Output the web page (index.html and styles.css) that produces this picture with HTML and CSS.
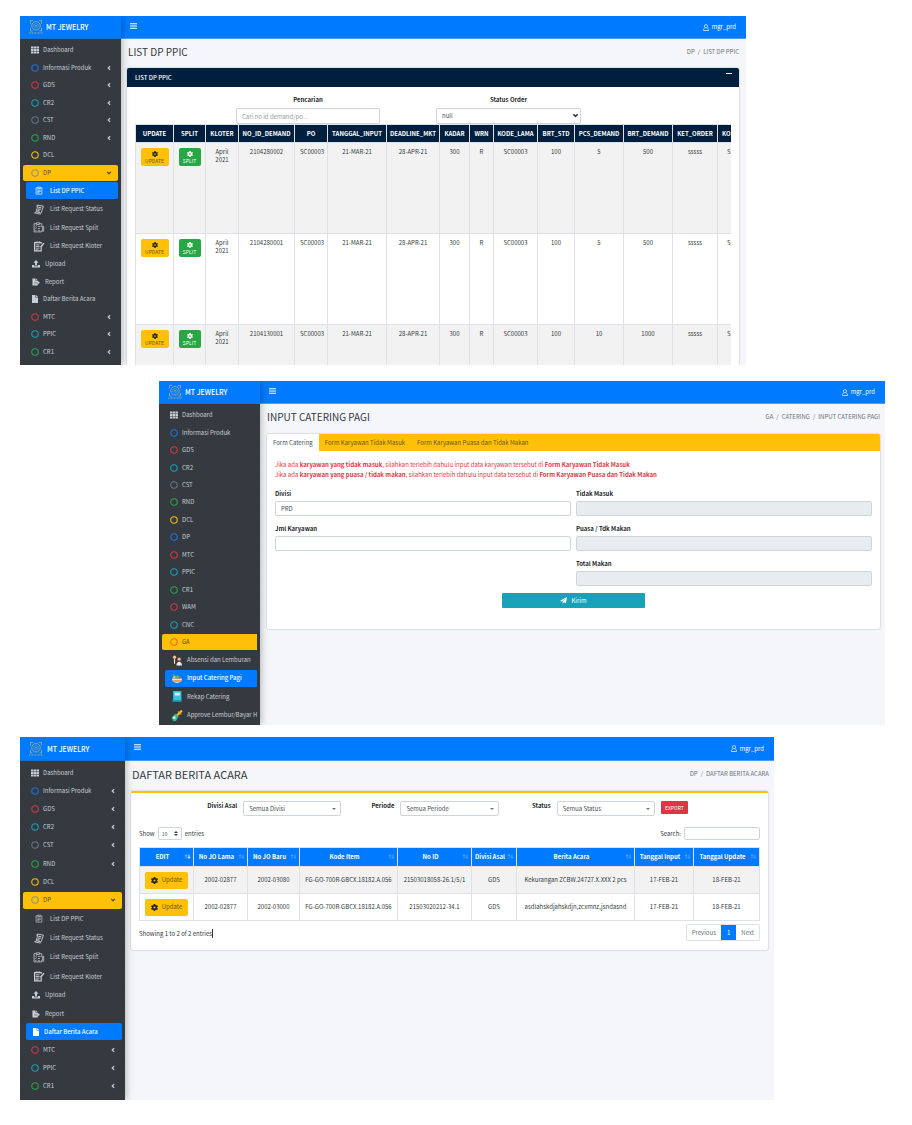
FILE: index.html
```html
<!DOCTYPE html>
<html lang="id">
<head>
<meta charset="utf-8">
<meta name="viewport" content="width=device-width, initial-scale=1">
<title>MT JEWELRY</title>
<link rel="stylesheet" href="styles.css">
</head>
<body>
<svg class="sprite" aria-hidden="true">
  <symbol id="logo" viewBox="0 0 28 28"><g fill="none" stroke="#b9b07a" stroke-width="1.500"><path d="M3 7V1h5M20 1h5v6M25 16v6h-4M7 22H3v-6"/><circle cx="14" cy="11.500" r="8.500"/><circle cx="14" cy="11.500" r="4.500" stroke-dasharray="2 1.500"/><circle cx="14" cy="11.500" r="1"/></g><path d="M0 26h28" stroke="#a8a67c" stroke-width="2" stroke-dasharray="2 1"/></symbol>
  <symbol id="bars" viewBox="0 0 14 12"><path d="M0 1.500h14M0 6h14M0 10.500h14" stroke="currentColor" stroke-width="2"/></symbol>
  <symbol id="user" viewBox="0 0 14 16"><g fill="none" stroke="currentColor" stroke-width="1.600"><circle cx="7" cy="5" r="3.800"/><path d="M4 9.500c-2 .5-3 2-3 5.500h12c0-3.500-1-5-3-5.500"/></g></symbol>
  <symbol id="th" viewBox="0 0 16 16"><path fill="currentColor" d="M0 1h4.800v4.200H0zM5.600 1h4.800v4.200H5.600zM11.200 1H16v4.200h-4.800zM0 6h4.800v4.200H0zM5.600 6h4.800v4.200H5.600zM11.200 6H16v4.200h-4.800zM0 11h4.800v4.200H0zM5.600 11h4.800v4.200H5.600zM11.200 11H16v4.200h-4.800z"/></symbol>
  <symbol id="ring" viewBox="0 0 16 16"><circle cx="8" cy="8" r="6.500" fill="none" stroke="currentColor" stroke-width="2.200"/></symbol>
  <symbol id="left" viewBox="0 0 10 16"><path d="M8 3L3 8l5 5" fill="none" stroke="currentColor" stroke-width="3.500"/></symbol>
  <symbol id="down" viewBox="0 0 16 10"><path d="M3 2l5 5 5-5" fill="none" stroke="currentColor" stroke-width="3.500"/></symbol>
  <symbol id="clip" viewBox="0 0 20 20"><g fill="none" stroke="currentColor" stroke-width="1.500"><path d="M7 4H3.500v14h13V4H13M7 2.500h6v3H7z"/><path d="M6 9h8M6 12h8M6 15h5"/></g></symbol>
  <symbol id="scroll" viewBox="0 0 20 20"><g fill="none" stroke="currentColor" stroke-width="1.700"><path d="M8 2l10 2-4 12c-.5 2-2 2.500-3.500 2L2 16c1.500 0 2.500-.5 3-2zM5 14l8 2M8 2c-2 0-3 2-1.500 3"/><path d="M9 6l5 1M8 9l5 1M7 12l4 1" stroke-width="2"/></g></symbol>
  <symbol id="split" viewBox="0 0 20 20"><g fill="none" stroke="currentColor" stroke-width="1.400"><path d="M5 3H1v15h14v-3M11 3h4v6M5 1.500h6v3H5z"/><path d="M3 7l1 1 2-2M3 11l1 1 2-2M3 15l1 1 2-2M8 8h5M8 12h4M8 16h4M18.500 8v7l-1 2.500-1-2.500V8z"/></g></symbol>
  <symbol id="kloter" viewBox="0 0 20 20"><g fill="none" stroke="currentColor" stroke-width="2.200"><path d="M14 9v9H2V3h12v2M5 1v3M8 1v3M11 1v3"/><path d="M4 7h7M4 10h7M4 13h7M4 16h5" stroke-width="1.600"/><path d="M19 4l-6 7" stroke-width="2.500"/></g></symbol>
  <symbol id="upload" viewBox="0 0 16 16"><path fill="currentColor" d="M8 0l5 5.500h-3V11H6V5.500H3zM0 10h4.500v2.500h7V10H16v5H0z"/></symbol>
  <symbol id="report" viewBox="0 0 18 16"><path fill="currentColor" d="M1 0h7v5h5v3H6v3h7v5H1zM9 0l4 4H9zM13 6l5 3.500-5 3.500v-2.500H7v-2h6z"/></symbol>
  <symbol id="file" viewBox="0 0 12 16"><path fill="currentColor" d="M0 0h7v5h5v11H0zM8 0l4 4H8z"/></symbol>
  <symbol id="gear" viewBox="0 0 16 16"><circle cx="8" cy="8" r="4.200" fill="none" stroke="currentColor" stroke-width="3.800"/><path d="M8 0v3M8 13v3M1 4l2.700 1.500M12.300 10.500L15 12M1 12l2.700-1.500M12.300 5.500L15 4" stroke="currentColor" stroke-width="3.800"/></symbol>
  <symbol id="plane" viewBox="0 0 16 16"><path fill="currentColor" d="M16 0l-2.500 14-5-2L6 15.500V11l7-8-8.500 7L0 8.500z"/></symbol>
  <symbol id="sort" viewBox="0 0 16 12"><path d="M4.500 11V2M1.500 5l3-3.500 3 3.500" fill="none" stroke="currentColor" stroke-width="1.600"/><path d="M11.500 1v9M8.500 7l3 3.500 3-3.500" fill="none" stroke="currentColor" stroke-width="1.600"/></symbol>
  <symbol id="sorted" viewBox="0 0 16 12"><path d="M4.500 11V2M1.500 5l3-3.500 3 3.500" fill="none" stroke="#8ec3ff" stroke-width="1.600"/><path d="M11.500 1v9M8.500 7l3 3.500 3-3.500" fill="none" stroke="#fff" stroke-width="2.200"/></symbol>
  <symbol id="people" viewBox="0 0 20 20"><circle cx="5.500" cy="4" r="3" fill="#efc09a"/><path d="M3 8h5l1 9H2z" fill="#4a2f2b"/><path d="M4.500 7h2v9h-2z" fill="#f2e8df"/><path d="M10 8c0-6 8-6 8 0v4h-8z" fill="#6b4640"/><circle cx="14" cy="7.500" r="2.500" fill="#efc09a"/><path d="M9 19c0-9 10-9 10 0z" fill="#e9eef2"/></symbol>
  <symbol id="food" viewBox="0 0 20 20"><path d="M1 10h18c0 5-3 8-9 8s-9-3-9-8z" fill="#efe6d0"/><path d="M1 13h18v3H2z" fill="#f08a3c"/><path d="M2 10c0-6 6-7 8-2z" fill="#f4c14c"/><path d="M9 10c1-6 7-6 9 0z" fill="#e4574c"/><path d="M2 2l8 6M8 8c1-4 4-4 5 0z" fill="#54b86b" stroke="#54b86b" stroke-width="2"/></symbol>
  <symbol id="note" viewBox="0 0 20 20"><path d="M3 0h15v19H3z" fill="#33c6e0"/><path d="M6 3h9v5H6z" fill="#d8f4fa"/><path d="M1 17h17v2H1z" fill="#1793ad"/></symbol>
  <symbol id="brush" viewBox="0 0 20 20"><path d="M19 1L9 11" stroke="#f3b62b" stroke-width="4"/><path d="M12 3l6 5" stroke="#f3b62b" stroke-width="2"/><path d="M7 7l6 5-5 8H3l-3-6z" fill="#37b98c"/><circle cx="5" cy="14" r="2.500" fill="#d8efe8"/></symbol>
</svg>

<main class="board">

<section class="app app-list">
  <aside class="side">
    <a class="brand" href="#"><svg><use href="#logo"/></svg>MT JEWELRY</a>
    <nav class="nav">
      <a class="item" href="#"><svg class="ic"><use href="#th"/></svg>Dashboard</a>
      <a class="item" href="#"><svg class="ic blue"><use href="#ring"/></svg>Informasi Produk<svg class="car"><use href="#left"/></svg></a>
      <a class="item" href="#"><svg class="ic red"><use href="#ring"/></svg>GDS<svg class="car"><use href="#left"/></svg></a>
      <a class="item" href="#"><svg class="ic teal"><use href="#ring"/></svg>CR2<svg class="car"><use href="#left"/></svg></a>
      <a class="item" href="#"><svg class="ic gray"><use href="#ring"/></svg>CST<svg class="car"><use href="#left"/></svg></a>
      <a class="item" href="#"><svg class="ic green"><use href="#ring"/></svg>RND<svg class="car"><use href="#left"/></svg></a>
      <a class="item" href="#"><svg class="ic amber"><use href="#ring"/></svg>DCL</a>
      <a class="item open" href="#"><svg class="ic slate"><use href="#ring"/></svg>DP<svg class="car"><use href="#down"/></svg></a>
      <a class="item sub active" href="#"><svg class="ic clip"><use href="#clip"/></svg>List DP PPIC</a>
      <a class="item sub" href="#"><svg class="ic"><use href="#scroll"/></svg>List Request Status</a>
      <a class="item sub" href="#"><svg class="ic"><use href="#split"/></svg>List Request Split</a>
      <a class="item sub" href="#"><svg class="ic"><use href="#kloter"/></svg>List Request Kloter</a>
      <a class="item mid" href="#"><svg class="ic"><use href="#upload"/></svg>Upload</a>
      <a class="item mid" href="#"><svg class="ic"><use href="#report"/></svg>Report</a>
      <a class="item doc" href="#"><svg class="ic"><use href="#file"/></svg>Daftar Berita Acara</a>
      <a class="item" href="#"><svg class="ic red"><use href="#ring"/></svg>MTC<svg class="car"><use href="#left"/></svg></a>
      <a class="item" href="#"><svg class="ic teal"><use href="#ring"/></svg>PPIC<svg class="car"><use href="#left"/></svg></a>
      <a class="item" href="#"><svg class="ic green"><use href="#ring"/></svg>CR1<svg class="car"><use href="#left"/></svg></a>
    </nav>
  </aside>
  <div class="page">
    <header class="top"><button class="burger" aria-label="Menu"><svg><use href="#bars"/></svg></button><a class="user" href="#"><svg><use href="#user"/></svg>mgr_prd</a></header>
    <div class="head"><h1>LIST DP PPIC</h1><p class="crumbs">DP<span>/</span>LIST DP PPIC</p></div>
    <div class="card navy">
      <div class="card-head"><h2>LIST DP PPIC</h2><button class="minus" aria-label="Tutup"></button></div>
      <div class="card-body">
        <div class="search">
          <div class="field f1"><label for="cari">Pencarian</label><input id="cari" type="text" placeholder="Cari no id demand/po..."></div>
          <div class="field f2"><label for="status">Status Order</label><div class="pick"><select id="status"><option>null</option></select><svg><use href="#down"/></svg></div></div>
        </div>
        <div class="scroller">
        <table class="orders">
          <colgroup><col class="w38"><col class="w32"><col class="w33"><col class="w56"><col class="w33"><col class="w59"><col class="w53"><col class="w30"><col class="w24"><col class="w44"><col class="w37"><col class="w49"><col class="w49"><col class="w45"><col class="w45"></colgroup>
          <thead><tr><th>UPDATE</th><th>SPLIT</th><th>KLOTER</th><th>NO_ID_DEMAND</th><th>PO</th><th>TANGGAL_INPUT</th><th>DEADLINE_MKT</th><th>KADAR</th><th>WRN</th><th>KODE_LAMA</th><th>BRT_STD</th><th>PCS_DEMAND</th><th>BRT_DEMAND</th><th>KET_ORDER</th><th class="cut">KO</th></tr></thead>
          <tbody>
            <tr><td><button class="act upd"><svg><use href="#gear"/></svg>UPDATE</button></td><td><button class="act spl"><svg><use href="#gear"/></svg>SPLIT</button></td><td>April 2021</td><td>2104280002</td><td>SC00003</td><td>21-MAR-21</td><td>28-APR-21</td><td>300</td><td>R</td><td>SC00003</td><td>100</td><td>5</td><td>500</td><td>sssss</td><td class="cut2">S</td></tr>
            <tr><td><button class="act upd"><svg><use href="#gear"/></svg>UPDATE</button></td><td><button class="act spl"><svg><use href="#gear"/></svg>SPLIT</button></td><td>April 2021</td><td>2104280001</td><td>SC00003</td><td>21-MAR-21</td><td>28-APR-21</td><td>300</td><td>R</td><td>SC00003</td><td>100</td><td>5</td><td>500</td><td>sssss</td><td class="cut2">S</td></tr>
            <tr class="last"><td><button class="act upd"><svg><use href="#gear"/></svg>UPDATE</button></td><td><button class="act spl"><svg><use href="#gear"/></svg>SPLIT</button></td><td>April 2021</td><td>2104130001</td><td>SC00003</td><td>21-MAR-21</td><td>28-APR-21</td><td>300</td><td>R</td><td>SC00003</td><td>100</td><td>10</td><td>1000</td><td>sssss</td><td class="cut2">S</td></tr>
          </tbody>
        </table>
        </div>
      </div>
    </div>
  </div>
</section>

<section class="app app-form">
  <aside class="side">
    <a class="brand" href="#"><svg><use href="#logo"/></svg>MT JEWELRY</a>
    <nav class="nav">
      <a class="item" href="#"><svg class="ic"><use href="#th"/></svg>Dashboard</a>
      <a class="item" href="#"><svg class="ic blue"><use href="#ring"/></svg>Informasi Produk</a>
      <a class="item" href="#"><svg class="ic red"><use href="#ring"/></svg>GDS</a>
      <a class="item" href="#"><svg class="ic teal"><use href="#ring"/></svg>CR2</a>
      <a class="item" href="#"><svg class="ic gray"><use href="#ring"/></svg>CST</a>
      <a class="item" href="#"><svg class="ic green"><use href="#ring"/></svg>RND</a>
      <a class="item" href="#"><svg class="ic amber"><use href="#ring"/></svg>DCL</a>
      <a class="item" href="#"><svg class="ic blue"><use href="#ring"/></svg>DP</a>
      <a class="item" href="#"><svg class="ic red"><use href="#ring"/></svg>MTC</a>
      <a class="item" href="#"><svg class="ic teal"><use href="#ring"/></svg>PPIC</a>
      <a class="item" href="#"><svg class="ic green"><use href="#ring"/></svg>CR1</a>
      <a class="item" href="#"><svg class="ic red"><use href="#ring"/></svg>WAM</a>
      <a class="item" href="#"><svg class="ic teal"><use href="#ring"/></svg>CNC</a>
      <a class="item open" href="#"><svg class="ic orange"><use href="#ring"/></svg>GA</a>
      <a class="item sub" href="#"><svg class="ic"><use href="#people"/></svg>Absensi dan Lemburan</a>
      <a class="item sub active" href="#"><svg class="ic"><use href="#food"/></svg>Input Catering Pagi</a>
      <a class="item sub" href="#"><svg class="ic"><use href="#note"/></svg>Rekap Catering</a>
      <a class="item sub" href="#"><svg class="ic"><use href="#brush"/></svg>Approve Lembur/Bayar Hu</a>
    </nav>
  </aside>
  <div class="page">
    <header class="top"><button class="burger" aria-label="Menu"><svg><use href="#bars"/></svg></button><a class="user" href="#"><svg><use href="#user"/></svg>mgr_prd</a></header>
    <div class="head"><h1>INPUT CATERING PAGI</h1><p class="crumbs">GA<span>/</span>CATERING<span>/</span>INPUT CATERING PAGI</p></div>
    <div class="card">
      <div class="tabs"><a class="on" href="#">Form Catering</a><a href="#">Form Karyawan Tidak Masuk</a><a href="#">Form Karyawan Puasa dan Tidak Makan</a></div>
      <form class="catering">
        <p class="warn">Jika ada <b>karyawan yang tidak masuk</b>, silahkan terlebih dahulu input data karyawan tersebut di <b>Form Karyawan Tidak Masuk</b><br>Jika ada <b>karyawan yang puasa / tidak makan</b>, silahkan terlebih dahulu input data tersebut di <b>Form Karyawan Puasa dan Tidak Makan</b></p>
        <div class="cols">
          <div class="col">
            <div class="field"><label for="divisi">Divisi</label><input id="divisi" type="text" value="PRD"></div>
            <div class="field"><label for="jml">Jml Karyawan</label><input id="jml" type="text"></div>
          </div>
          <div class="col">
            <div class="field"><label for="tm">Tidak Masuk</label><input id="tm" type="text" disabled></div>
            <div class="field"><label for="pm">Puasa / Tdk Makan</label><input id="pm" type="text" disabled></div>
            <div class="field"><label for="tot">Total Makan</label><input id="tot" type="text" disabled></div>
          </div>
        </div>
        <button type="button" class="send"><svg><use href="#plane"/></svg>Kirim</button>
      </form>
    </div>
  </div>
</section>

<section class="app app-news">
  <aside class="side">
    <a class="brand" href="#"><svg><use href="#logo"/></svg>MT JEWELRY</a>
    <nav class="nav">
      <a class="item" href="#"><svg class="ic"><use href="#th"/></svg>Dashboard</a>
      <a class="item" href="#"><svg class="ic blue"><use href="#ring"/></svg>Informasi Produk<svg class="car"><use href="#left"/></svg></a>
      <a class="item" href="#"><svg class="ic red"><use href="#ring"/></svg>GDS<svg class="car"><use href="#left"/></svg></a>
      <a class="item" href="#"><svg class="ic teal"><use href="#ring"/></svg>CR2<svg class="car"><use href="#left"/></svg></a>
      <a class="item" href="#"><svg class="ic gray"><use href="#ring"/></svg>CST<svg class="car"><use href="#left"/></svg></a>
      <a class="item" href="#"><svg class="ic green"><use href="#ring"/></svg>RND<svg class="car"><use href="#left"/></svg></a>
      <a class="item" href="#"><svg class="ic amber"><use href="#ring"/></svg>DCL</a>
      <a class="item open" href="#"><svg class="ic slate"><use href="#ring"/></svg>DP<svg class="car"><use href="#down"/></svg></a>
      <a class="item sub" href="#"><svg class="ic clip"><use href="#clip"/></svg>List DP PPIC</a>
      <a class="item sub" href="#"><svg class="ic"><use href="#scroll"/></svg>List Request Status</a>
      <a class="item sub" href="#"><svg class="ic"><use href="#split"/></svg>List Request Split</a>
      <a class="item sub" href="#"><svg class="ic"><use href="#kloter"/></svg>List Request Kloter</a>
      <a class="item mid" href="#"><svg class="ic"><use href="#upload"/></svg>Upload</a>
      <a class="item mid" href="#"><svg class="ic"><use href="#report"/></svg>Report</a>
      <a class="item doc active" href="#"><svg class="ic"><use href="#file"/></svg>Daftar Berita Acara</a>
      <a class="item" href="#"><svg class="ic red"><use href="#ring"/></svg>MTC<svg class="car"><use href="#left"/></svg></a>
      <a class="item" href="#"><svg class="ic teal"><use href="#ring"/></svg>PPIC<svg class="car"><use href="#left"/></svg></a>
      <a class="item" href="#"><svg class="ic green"><use href="#ring"/></svg>CR1<svg class="car"><use href="#left"/></svg></a>
    </nav>
  </aside>
  <div class="page">
    <header class="top"><button class="burger" aria-label="Menu"><svg><use href="#bars"/></svg></button><a class="user" href="#"><svg><use href="#user"/></svg>mgr_prd</a></header>
    <div class="head"><h1>DAFTAR BERITA ACARA</h1><p class="crumbs">DP<span>/</span>DAFTAR BERITA ACARA</p></div>
    <div class="card gold">
      <div class="filters">
        <label for="da">Divisi Asal</label><div class="pick"><select id="da"><option>Semua Divisi</option></select><i class="tri"></i></div>
        <label for="pe">Periode</label><div class="pick"><select id="pe"><option>Semua Periode</option></select><i class="tri"></i></div>
        <label for="st">Status</label><div class="pick"><select id="st"><option>Semua Status</option></select><i class="tri"></i></div>
        <button class="export">EXPORT</button>
      </div>
      <div class="tools">
        <div class="len"><label for="len">Show</label><div class="pick small"><select id="len"><option>10</option></select><i class="tri up"></i><i class="tri"></i></div>entries</div>
        <div class="find"><label for="find">Search:</label><input id="find" type="text"></div>
      </div>
      <table class="news">
        <colgroup><col class="w54"><col class="w54"><col class="w52"><col class="w98"><col class="w74"><col class="w45"><col class="w118"><col class="w59"><col class="w66"></colgroup>
        <thead><tr>
          <th><span class="th">EDIT<svg><use href="#sorted"/></svg></span></th><th><span class="th">No JO Lama<svg><use href="#sort"/></svg></span></th><th><span class="th">No JO Baru<svg><use href="#sort"/></svg></span></th><th><span class="th">Kode Item<svg><use href="#sort"/></svg></span></th><th><span class="th">No ID<svg><use href="#sort"/></svg></span></th><th><span class="th">Divisi Asal<svg><use href="#sort"/></svg></span></th><th><span class="th">Berita Acara<svg><use href="#sort"/></svg></span></th><th><span class="th">Tanggal Input<svg><use href="#sort"/></svg></span></th><th><span class="th">Tanggal Update<svg><use href="#sort"/></svg></span></th>
        </tr></thead>
        <tbody>
          <tr><td><button class="edit"><svg><use href="#gear"/></svg>Update</button></td><td>2002-02877</td><td>2002-03080</td><td>FG-GO-700R-GBCX.18182.A.056</td><td>21503018058-26.1/5/1</td><td>GDS</td><td>Kekurangan ZCBW.24727.X.XXX 2 pcs</td><td>17-FEB-21</td><td>18-FEB-21</td></tr>
          <tr><td><button class="edit"><svg><use href="#gear"/></svg>Update</button></td><td>2002-02877</td><td>2002-03000</td><td>FG-GO-700R-GBCX.18182.A.056</td><td>21503020212-34.1</td><td>GDS</td><td>asdlahskdjahskdjn,zcxmnz,jsndasnd</td><td>17-FEB-21</td><td>18-FEB-21</td></tr>
        </tbody>
      </table>
      <div class="foot"><p class="info">Showing 1 to 2 of 2 entries</p><div class="pager"><a href="#">Previous</a><a class="on" href="#">1</a><a href="#">Next</a></div></div>
    </div>
  </div>
</section>

</main>
</body>
</html>
```
FILE: styles.css
```css
* { box-sizing: border-box; }
body { margin: 0; background: #fff; color: #343a40; font-family: "Noto Sans CJK SC", "Noto Sans", sans-serif; font-size: 6px; line-height: 10px; }
h1, h2, p { margin: 0; font-weight: 400; }
a { color: inherit; text-decoration: none; }
button, input, select { font: inherit; color: inherit; margin: 0; padding: 0; border: 0; background: none; border-radius: 0; outline: 0; }
svg { display: block; flex: none; }
.sprite { position: absolute; width: 0; height: 0; }

.board { display: flex; flex-direction: column; padding: 16px 27px 25px 20px; }
.app { display: grid; grid-template-columns: 101px minmax(0, 1fr); background: #f4f6f9; overflow: hidden; }
.app-list { min-height: 349px; margin-right: 139px; }
.app-form { min-height: 344px; margin: 16px 0 0 139px; }
.app-news { min-height: 363px; margin: 12px 111px 0 0; grid-template-columns: 105px minmax(0, 1fr); }

/* sidebar */
.side { position: relative; z-index: 2; display: flex; flex-direction: column; min-width: 0; background: #343a40; box-shadow: 0 0 8px rgba(0, 0, 0, .35); }
.brand { display: flex; align-items: center; gap: 3px; height: 23px; padding-left: 9px; background: #007bff; color: #fff; font-size: 7px; font-weight: 500; border-bottom: 1px solid #1a6fd0; }
.brand svg { width: 14px; height: 14px; }
.nav { flex: 1; display: flex; flex-direction: column; padding: 3px 3px 4px; color: #c8cdd2; }
.app-form .nav { padding-bottom: 0; }
.item { flex: 17 0 0px; display: flex; align-items: center; gap: 4px; min-height: 16px; padding-left: 8px; border-bottom: 1px solid #343a40; background-clip: padding-box; border-radius: 2px; white-space: nowrap; overflow: hidden; }
.ic { width: 8px; height: 8px; }
.car { width: 6px; height: 6px; margin: 0 6px 0 auto; }
.sub { flex-grow: 18; margin-left: 3px; gap: 5px; padding-left: 7px; }
.sub .ic { width: 12px; height: 11px; }
.sub .clip { padding: 1px; }
.app-form .sub { gap: 4px; padding-left: 6px; }
.app-form .open, .app-form .sub { border-radius: 2px 0 0 2px; }
.mid { gap: 5px; padding-left: 9px; }
.doc { gap: 5px; padding-left: 9px; }
.doc .ic { width: 6px; }
.doc.active { margin-left: 3px; padding-left: 7px; }
.open { background-color: #ffc107; color: #5c4a10; }
.active { background-color: #007bff; color: #fff; font-weight: 500; }
.blue { color: #1a73e8; } .red { color: #dc3545; } .teal { color: #17a2b8; } .gray { color: #6c757d; }
.green { color: #28a745; } .amber { color: #ffc107; } .slate { color: #8a9080; } .orange { color: #f0672b; }

/* page frame */
.page { display: flex; flex-direction: column; min-width: 0; }
.top { display: flex; align-items: center; justify-content: space-between; height: 23px; padding: 0 10px 0 9px; background: #007bff; color: #fff; border-bottom: 1px solid #4a9df5; }
.burger { padding-bottom: 3px; }
.burger svg { width: 7px; height: 6px; }
.user { display: flex; align-items: center; gap: 3px; }
.user svg { width: 6px; height: 7px; }
.head { display: flex; align-items: center; justify-content: space-between; height: 29px; padding: 0 7px 4px; }
.head h1 { font-size: 10px; line-height: 14px; }
.crumbs { color: #6c757d; }
.crumbs span { margin: 0 3px; }
.card { margin: 0 5px 0 6px; background: #fff; border-radius: 2px; box-shadow: 0 0 2px rgba(0, 0, 0, .3); }
.app-form .card { margin-left: 7px; }
.app-form .head, .app-news .head { height: 30px; padding-right: 5px; }
.app-news .brand, .app-news .top { height: 24px; }
.app-news .brand { gap: 4px; }
.app-news .head h1 { font-size: 11px; }

.field { display: flex; flex-direction: column; }
.field label, .filters label { font-weight: 700; color: #212529; }
input, select { display: block; width: 100%; min-width: 0; height: 16px; padding: 0 5px; border: 1px solid #ced4da; border-radius: 2px; background: #fff; color: #495057; appearance: none; }
input::placeholder { color: #939ba2; opacity: 1; }
input:disabled { background: #e9ecef; }
.pick { position: relative; }
.pick svg { position: absolute; right: 2px; top: 5px; width: 7px; height: 5px; }
.tri { position: absolute; right: 5px; top: 7px; border: 2px solid transparent; border-top-color: #6c757d; border-bottom: 0; }

/* order list */
.app-list .card { flex: 1; margin-right: 7px; border-radius: 2px 2px 0 0; }
.card-head { display: flex; justify-content: space-between; align-items: center; height: 19px; padding: 0 7px 0 8px; background: #001f3f; color: #fff; border-radius: 2px 2px 0 0; }
.card-head h2 { font-size: 6px; font-weight: 500; }
.minus { width: 6px; height: 10px; border-top: 1px solid #fff; }
.card-body { padding: 0 8px; }
.search { display: grid; grid-template-columns: 101fr 144fr 56fr 145fr 150fr; padding-top: 6px; }
.search .field { gap: 2px; }
.search label { text-align: center; line-height: 13px; }
.f1 { grid-column: 2; } .f2 { grid-column: 4; }
.scroller { overflow: hidden; }
table { border-collapse: collapse; table-layout: fixed; }
th, td { padding: 0; text-align: center; border: 1px solid #dee2e6; }
th { font-weight: 700; color: #fff; white-space: nowrap; }
.orders { width: 627px; }
.orders th { height: 18px; background: #001f3f; }
.orders td { height: 91px; padding: 5px 5px 0; vertical-align: top; line-height: 8px; }
.orders tr.last td { height: 40px; border-bottom: 0; }
tbody tr:nth-child(odd) { background: #f2f2f2; }
.orders th.cut { text-align: left; padding-left: 4px; }
.orders td.cut2 { text-align: left; padding-left: 9px; }
.orders td:nth-child(-n+2) { padding: 5px 0 0; }
.act { display: inline-flex; flex-direction: column; align-items: center; justify-content: center; height: 18px; border-radius: 2px; font-size: 5px; line-height: 7px; }
.act svg { width: 6px; height: 6px; }
.upd { background: #ffc107; width: 28px; color: #6b5413; }
.upd svg, .edit svg { color: #212529; }
.spl { background: #28a745; width: 22px; color: #fff; }

/* catering form */
.tabs { display: flex; height: 17px; background: #ffc107; border-radius: 2px 2px 0 0; overflow: hidden; color: #6b5413; }
.tabs a { padding: 4px 6px; }
.tabs .on { background: #fff; color: #495057; }
.catering { padding: 9px 8px 21px; }
.warn { color: #dc3545; }
.cols { display: grid; grid-template-columns: 1fr 1fr; gap: 5px; padding-top: 8px; }
.col { display: flex; flex-direction: column; gap: 7px; }
.col .field { gap: 1px; }
.col label { line-height: 12px; }
.col input { height: 15px; }
.send { display: flex; align-items: center; justify-content: center; gap: 4px; width: 24%; height: 15px; margin: 7px auto 0; border-radius: 1px; background: #17a2b8; color: #fff; }
.send svg { width: 7px; height: 7px; }

/* berita acara */
.app-news .card { margin-right: 6px; }
.gold { border-top: 2px solid #ffc107; padding: 8px 8px 9px; }
.filters { display: grid; grid-template-columns: 98fr 98fr 47fr 98fr 46fr 98fr 27fr 66fr; column-gap: 6px; align-items: start; }
.filters label { text-align: right; }
.filters select { height: 15px; }
.export { height: 13px; border-radius: 1px; background: #dc3545; color: #fff; font-size: 5px; line-height: 13px; }
.tools { display: flex; justify-content: space-between; align-items: center; padding: 11px 0 7px; }
.len, .find { display: flex; align-items: center; gap: 3px; }
.small { width: 24px; }
.tools select, .tools input { height: 13px; }
.tools select { font-size: 5px; padding: 0 3px; }
.small .tri { top: 7px; right: 4px; border-top-color: #343a40; }
.small .up { top: 4px; border-top: 0; border-bottom: 2px solid #343a40; }
.find input { width: 76px; }
.news { width: 100%; }
.news th { height: 19px; background: #007bff; }
.th { display: block; position: relative; padding-right: 8px; }
.th svg { position: absolute; right: 2px; top: 2px; width: 7px; height: 5px; color: #6fb3ff; }
.news td { height: 27px; white-space: nowrap; }
.edit { display: inline-flex; align-items: center; justify-content: center; gap: 4px; width: 43px; height: 17px; border-radius: 2px; background: #ffc107; color: #6b5413; }
.edit svg { width: 7px; height: 7px; }
.foot { display: flex; justify-content: space-between; align-items: flex-start; padding-top: 3px; }
.info { margin-top: 5px; border-right: 1px solid #343a40; line-height: 9px; }
.pager { display: flex; border: 1px solid #dee2e6; border-radius: 2px; line-height: 15px; color: #6c757d; }
.pager a { padding: 0 5px; }
.pager .on { padding: 0 6px; background: #007bff; color: #fff; }

.w24 { width: 24px; } .w30 { width: 30px; } .w32 { width: 32px; } .w33 { width: 33px; } .w37 { width: 37px; }
.w38 { width: 38px; } .w44 { width: 44px; } .w45 { width: 45px; } .w49 { width: 49px; } .w52 { width: 52px; }
.w53 { width: 53px; } .w54 { width: 54px; } .w56 { width: 56px; } .w59 { width: 59px; } .w66 { width: 66px; }
.w74 { width: 74px; } .w98 { width: 98px; } .w118 { width: 118px; }
```
